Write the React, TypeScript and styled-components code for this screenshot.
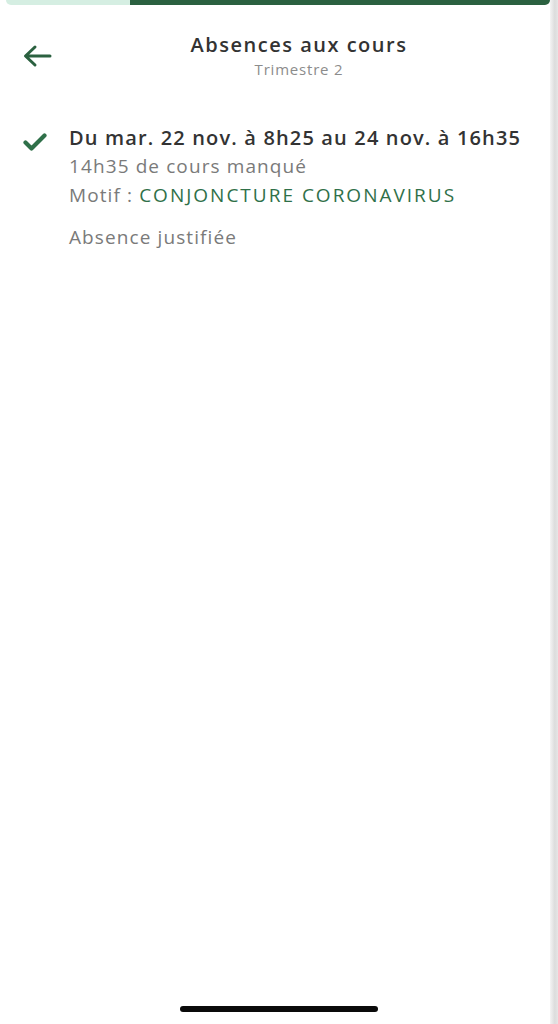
import React from 'react'
import styled, { createGlobalStyle } from 'styled-components'

const GlobalStyle = createGlobalStyle`
  html, body {
    margin: 0;
    padding: 0;
    background: #ffffff;
  }
  body {
    font-family: 'Open Sans', 'Noto Sans', sans-serif;
    color: #333333;
  }
`

const Screen = styled.div`
  display: flex;
  width: 558px;
  height: 1024px;
  overflow: hidden;
`

const Page = styled.div`
  flex: 1;
  display: flex;
  flex-direction: column;
  background: #ffffff;
`

const Edge = styled.div`
  width: 8px;
  background: linear-gradient(to right, #f4f4f4, #dcdcdc 60%, #e6e6e6);
`

const Progress = styled.div`
  display: flex;
  height: 5px;
  margin-left: 6px;
  border-radius: 0 0 6px 6px;
  overflow: hidden;
`

const ProgressPart = styled.div<{ $done?: boolean; $grow: number }>`
  flex: ${({ $grow }) => $grow};
  background: ${({ $done }) => ($done ? '#2b6140' : '#d5eee2')};
`

const Header = styled.header`
  display: grid;
  grid-template-columns: 60px 1fr 12px;
  align-items: center;
  padding: 27px 0 0 0;
`

const BackButton = styled.button`
  border: 0;
  background: none;
  padding: 0 0 0 22px;
  display: flex;
  align-items: center;
  height: 30px;
  cursor: pointer;
`

const Titles = styled.div`
  display: flex;
  flex-direction: column;
  align-items: center;
`

const Title = styled.h1`
  margin: 0;
  font-size: 20px;
  line-height: 26px;
  font-weight: 600;
  letter-spacing: 1.5px;
  color: #333333;
`

const Subtitle = styled.div`
  font-size: 15px;
  line-height: 20px;
  letter-spacing: 0.8px;
  color: #8c8c8c;
  margin-top: 1px;
`

const List = styled.div`
  display: flex;
  flex-direction: column;
  padding-top: 45px;
`

const Entry = styled.div`
  display: flex;
  gap: 22px;
  padding-left: 23px;
`

const CheckWrap = styled.div`
  padding-top: 9px;
`

const Details = styled.div`
  display: flex;
  flex-direction: column;
`

const When = styled.div`
  font-size: 20px;
  line-height: 28px;
  font-weight: 600;
  letter-spacing: 1.15px;
  color: #333333;
`

const Line = styled.div<{ $spaced?: boolean }>`
  font-size: 19px;
  line-height: 29px;
  letter-spacing: 1.1px;
  color: #7a7a7a;
  margin-top: ${({ $spaced }) => ($spaced ? '13px' : '0')};
`

const Reason = styled.span`
  color: #2f7049;
  letter-spacing: 2px;
`

const Spacer = styled.div`
  flex: 1;
`

const HomeBar = styled.div`
  align-self: center;
  width: 198px;
  height: 6px;
  border-radius: 3px;
  background: #0a0a0a;
  margin: 0 0 12px 8px;
`

export default function App() {
  return (
    <>
      <GlobalStyle />
      <Screen>
        <Page>
          <Progress>
            <ProgressPart $grow={124} />
            <ProgressPart $grow={418} $done />
          </Progress>
          <Header>
            <BackButton aria-label="Retour">
              <svg width="30" height="24" viewBox="0 0 30 24" fill="none">
                <path
                  d="M28 12H4M13 3L3.5 12L13 21"
                  stroke="#2b6140"
                  strokeWidth="3"
                  strokeLinecap="round"
                  strokeLinejoin="round"
                />
              </svg>
            </BackButton>
            <Titles>
              <Title>Absences aux cours</Title>
              <Subtitle>Trimestre 2</Subtitle>
            </Titles>
            <div />
          </Header>
          <List>
            <Entry>
              <CheckWrap>
                <svg width="24" height="18" viewBox="0 0 24 18">
                  <path
                    d="M2.5 9.5L8.5 15.5L21.5 2.5"
                    fill="none"
                    stroke="#2f7049"
                    strokeWidth="4.2"
                    strokeLinecap="round"
                    strokeLinejoin="round"
                  />
                </svg>
              </CheckWrap>
              <Details>
                <When>Du mar. 22 nov. à 8h25 au 24 nov. à 16h35</When>
                <Line>14h35 de cours manqué</Line>
                <Line>
                  Motif : <Reason>CONJONCTURE CORONAVIRUS</Reason>
                </Line>
                <Line $spaced>Absence justifiée</Line>
              </Details>
            </Entry>
          </List>
          <Spacer />
          <HomeBar />
        </Page>
        <Edge />
      </Screen>
    </>
  )
}
